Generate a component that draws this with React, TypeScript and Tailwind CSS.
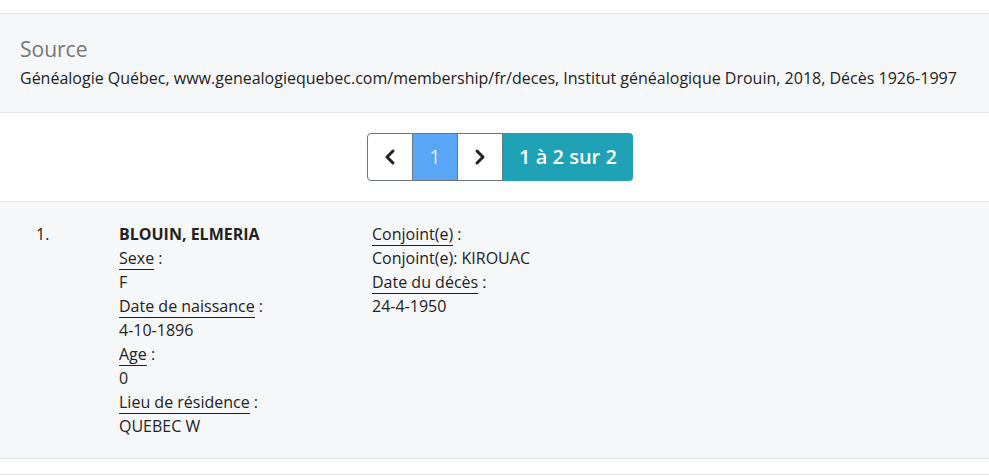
import { ChevronLeft, ChevronRight } from "lucide-react"

const font = { fontFamily: '"Open Sans", "Liberation Sans", sans-serif' }

function Field({ label, value }: { label: string; value: string }) {
  return (
    <>
      <div>
        <span className="border-b border-[#222]">{label}</span> :
      </div>
      <div>{value}</div>
    </>
  )
}

export default function App() {
  return (
    <div className="w-[989px] h-[476px] bg-white text-[#222] overflow-hidden" style={font}>
      <div className="h-[13px]" />

      {/* Source */}
      <div className="h-[100px] bg-[#f6f7f9] border-y border-[#e6e6e6] px-5 pt-[21px]">
        <div className="text-[21px] leading-[29px] text-[#757575]">Source</div>
        <div className="text-[16px] leading-[24px] mt-[2px]">
          Généalogie Québec, www.genealogiequebec.com/membership/fr/deces, Institut généalogique Drouin, 2018, Décès 1926-1997
        </div>
      </div>

      {/* Pagination */}
      <div className="h-[88px] flex items-center justify-center">
        <div className="flex h-[48px] ml-[11px]">
          <button className="w-[46px] flex items-center justify-center border border-[#6c757d] rounded-l-[4px] bg-white">
            <ChevronLeft size={24} strokeWidth={3} className="text-[#222]" />
          </button>
          <button className="w-[44px] flex items-center justify-center bg-[#5aa6f6] text-white/80 text-[20px] border-y border-[#6c757d]">
            1
          </button>
          <button className="w-[46px] flex items-center justify-center border border-[#6c757d] bg-white">
            <ChevronRight size={24} strokeWidth={3} className="text-[#222]" />
          </button>
          <div className="w-[130px] flex items-center justify-center bg-[#1fa2b6] text-white text-[20px] font-semibold rounded-r-[4px]">
            1 à 2 sur 2
          </div>
        </div>
      </div>

      {/* Record */}
      <div className="h-[258px] bg-[#f6f7f9] border-y border-[#e6e6e6] pt-[20px] text-[16px] leading-[24px]">
        <div className="flex">
          <div className="w-[119px] pl-[36px]">1.</div>
          <div className="w-[253px]">
            <div className="font-bold">BLOUIN, ELMERIA</div>
            <Field label="Sexe" value="F" />
            <Field label="Date de naissance" value="4-10-1896" />
            <Field label="Age" value="0" />
            <Field label="Lieu de résidence" value="QUEBEC W" />
          </div>
          <div>
            <Field label="Conjoint(e)" value="Conjoint(e): KIROUAC" />
            <Field label="Date du décès" value="24-4-1950" />
          </div>
        </div>
      </div>
      <div className="h-[15px]" />
      <div className="border-t border-[#e6e6e6]" />
    </div>
  )
}
